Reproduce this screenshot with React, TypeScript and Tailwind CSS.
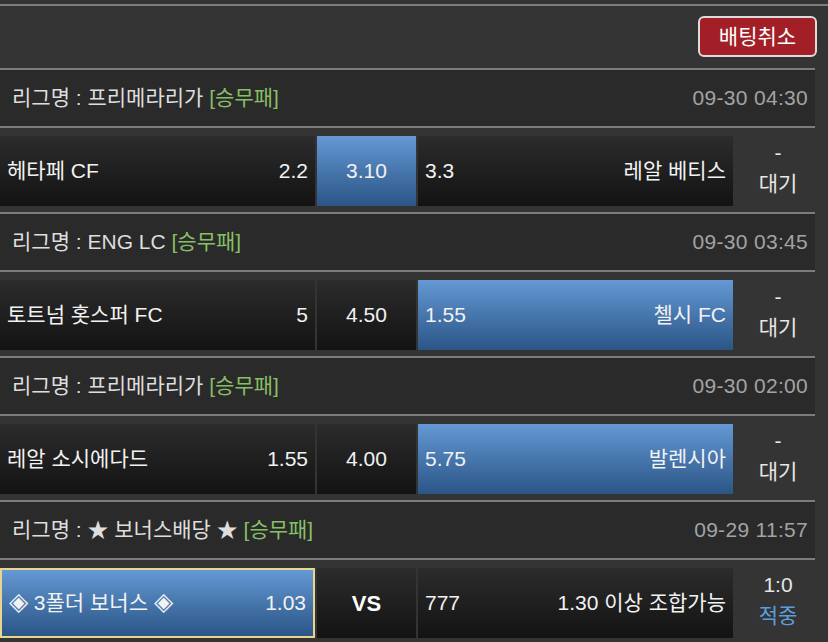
import React from "react";

type Match = {
  league: string;
  time: string;
  home: React.ReactNode;
  homeOdd: string;
  draw: string;
  awayOdd: string;
  away: string;
  pick: "home" | "draw" | "away";
  status: string;
  result: string;
  bonus?: boolean;
};

const Diamond = () => <span className="text-[25px] leading-none">◈</span>;

const matches: Match[] = [
  { league: "리그명 : 프리메라리가", time: "09-30 04:30", home: "헤타페 CF", homeOdd: "2.2", draw: "3.10", awayOdd: "3.3", away: "레알 베티스", pick: "draw", status: "-", result: "대기" },
  { league: "리그명 : ENG LC", time: "09-30 03:45", home: "토트넘 홋스퍼 FC", homeOdd: "5", draw: "4.50", awayOdd: "1.55", away: "첼시 FC", pick: "away", status: "-", result: "대기" },
  { league: "리그명 : 프리메라리가", time: "09-30 02:00", home: "레알 소시에다드", homeOdd: "1.55", draw: "4.00", awayOdd: "5.75", away: "발렌시아", pick: "away", status: "-", result: "대기" },
  {
    league: "리그명 : ★ 보너스배당 ★",
    time: "09-29 11:57",
    home: (
      <>
        <Diamond /> 3폴더 보너스 <Diamond />
      </>
    ),
    homeOdd: "1.03",
    draw: "VS",
    awayOdd: "777",
    away: "1.30 이상 조합가능",
    pick: "home",
    status: "1:0",
    result: "적중",
    bonus: true,
  },
];

const dark = "bg-gradient-to-b from-[#2c2c2c] to-[#131313]";
const blue = "bg-gradient-to-b from-[#6499d5] to-[#2b5586]";

function MatchBlock({ m }: { m: Match }) {
  return (
    <div className="w-[815px]">
      <div className="h-[2px] bg-[#7c7c7c]" />
      <div className="h-[56px] bg-[#2a2a2a] flex items-center justify-between pl-[12px] pr-[7px]">
        <div className="text-[#dedede]">
          {m.league}
          <span className="text-[#86bf66]">{m.bonus ? "  " : " "}[승무패]</span>
        </div>
        <div className="text-[#a3a3a3] tracking-[0.3px]">{m.time}</div>
      </div>
      <div className="h-[2px] bg-[#7c7c7c]" />
      <div className="flex gap-[2px] pt-[8px] pb-[6px]">
        <div
          className={`w-[315px] h-[70px] flex items-center justify-between pl-[7px] pr-[7px] text-[#f2f2f2] ${
            m.pick === "home" ? blue : dark
          } ${m.bonus ? "border-2 border-[#e9d58f] pl-[6px] pr-[6px]" : ""}`}
        >
          <span>{m.home}</span>
          <span>{m.homeOdd}</span>
        </div>
        <div
          className={`w-[99px] h-[70px] flex items-center justify-center text-[#f2f2f2] ${
            m.pick === "draw" ? blue : dark
          } ${m.draw === "VS" ? "font-bold text-white text-[22px]" : ""}`}
        >
          {m.draw}
        </div>
        <div
          className={`w-[315px] h-[70px] flex items-center justify-between pl-[7px] pr-[7px] text-[#f2f2f2] ${
            m.pick === "away" ? blue : dark
          }`}
        >
          <span>{m.awayOdd}</span>
          <span>{m.away}</span>
        </div>
        <div className="flex-1 flex flex-col items-center justify-center leading-[31px] pb-[7px] pl-[6px]">
          <span className="text-[#e6e6e6]">{m.status}</span>
          <span className={m.result === "적중" ? "text-[#5c9edb]" : "text-[#e6e6e6]"}>{m.result}</span>
        </div>
      </div>
    </div>
  );
}

export default function App() {
  return (
    <div className="w-[828px] h-[642px] overflow-hidden bg-[#343434] font-['Liberation_Sans','Noto_Sans_CJK_KR',sans-serif] text-[21px]">
      <div className="h-[4px]" />
      <div className="h-[2px] bg-[#7c7c7c]" />
      <div className="h-[62px] flex justify-end items-start pt-[10px] pr-[11px]">
        <button className="w-[119px] h-[41px] rounded-[6px] border-2 border-[#dcdcdc] bg-[#a31f27] text-white text-[21px]">
          배팅취소
        </button>
      </div>
      {matches.map((m, i) => (
        <MatchBlock key={i} m={m} />
      ))}
    </div>
  );
}
